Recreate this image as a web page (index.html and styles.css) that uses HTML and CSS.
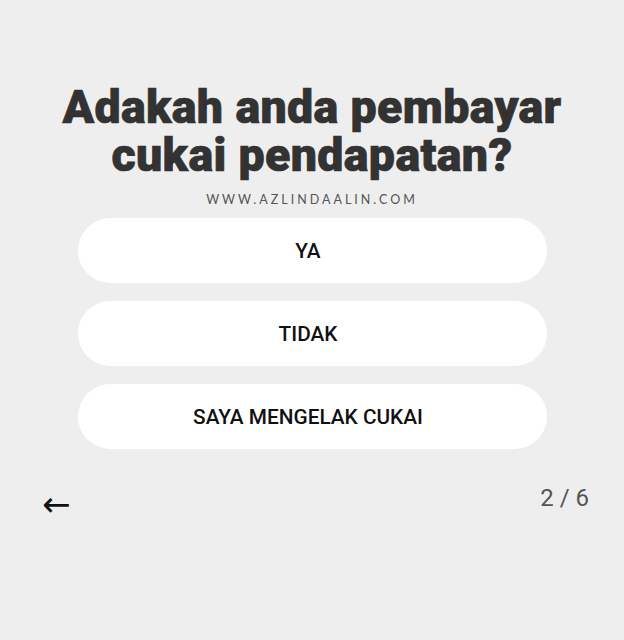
FILE: index.html
```html
<!DOCTYPE html>
<html lang="ms">
<head>
<meta charset="utf-8">
<link rel="stylesheet" href="styles.css">
</head>
<body>
<main class="quiz">
  <h1 class="question">Adakah anda pembayar<br>cukai pendapatan?</h1>
  <div class="site">WWW.AZLINDAALIN.COM</div>
  <div class="options">
    <button class="option">YA</button>
    <button class="option">TIDAK</button>
    <button class="option">SAYA MENGELAK CUKAI</button>
  </div>
  <div class="nav">
    <span class="back">&larr;</span>
    <span class="count">2 / 6</span>
  </div>
</main>
</body>
</html>
```
FILE: styles.css
```css
html, body {
  margin: 0;
  padding: 0;
  background: #eeeeee;
}
body {
  font-family: Roboto, "Liberation Sans", sans-serif;
  width: 624px;
  height: 640px;
}
.quiz {
  display: flex;
  flex-direction: column;
  align-items: center;
  padding-top: 83px;
}
.question {
  margin: 0;
  font-size: 46.5px;
  font-weight: 900;
  line-height: 48px;
  color: #333333;
  text-align: center;
  letter-spacing: 0.35px;
  -webkit-text-stroke: 0.7px #2e2e2e;
}
.site {
  margin-top: 13px;
  font-family: Lato, "Open Sans", sans-serif;
  font-size: 12.5px;
  letter-spacing: 3px;
  color: #555555;
  line-height: 16px;
}
.options {
  display: flex;
  flex-direction: column;
  gap: 18px;
  margin-top: 10px;
  width: 469px;
}
.option {
  height: 65px;
  border: none;
  border-radius: 33px;
  background: #ffffff;
  font-family: Roboto, "Liberation Sans", sans-serif;
  font-size: 20.8px;
  font-weight: 500;
  color: #111111;
  padding: 0 8px 0 0;
}
.nav {
  align-self: stretch;
  display: flex;
  justify-content: space-between;
  align-items: flex-start;
  padding: 0 35px 0 42px;
  margin-top: 35px;
}
.back {
  font-size: 34px;
  color: #111;
  font-family: "DejaVu Sans", sans-serif;
  margin-top: 3px;
  line-height: 34px;
}
.count {
  font-size: 24px;
  color: #555555;
  line-height: 28px;
}
```
